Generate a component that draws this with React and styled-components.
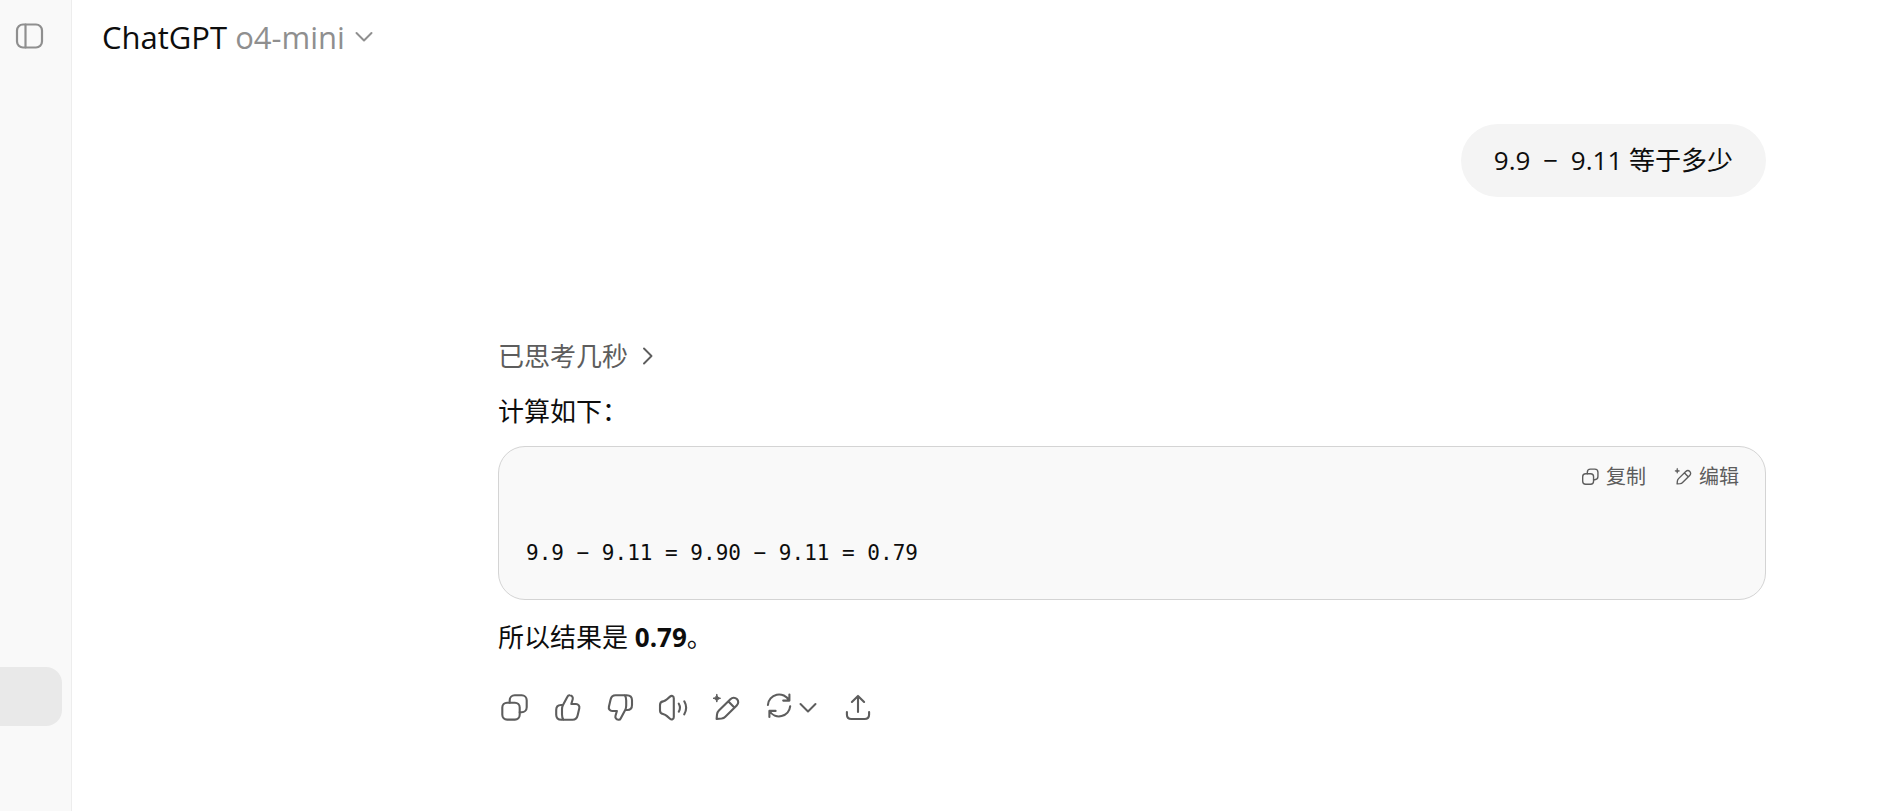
import styled, { createGlobalStyle } from 'styled-components'

const GlobalStyle = createGlobalStyle`
    * {
        box-sizing: border-box;
    }

    body {
        margin: 0;
        background: #ffffff;
        color: #0d0d0d;
        font-family: 'Open Sans', 'Noto Sans CJK SC', sans-serif;
        font-size: 26px;
        line-height: 44px;
    }
`

const Page = styled.div`
    display: flex;
    min-height: 100vh;
`

const Sidebar = styled.aside`
    flex: 0 0 72px;
    display: flex;
    flex-direction: column;
    padding-top: 20px;
    background: #f9f9f9;
    border-right: 1px solid #ededed;
`

const IconButton = styled.button`
    display: flex;
    align-items: center;
    gap: 4px;
    padding: 0;
    border: 0;
    background: none;
    color: ${(props) => props.$color || '#5d5d5d'};
    cursor: pointer;
`

const SidebarToggle = styled(IconButton)`
    align-self: flex-start;
    margin-left: 13px;
`

const RetryButton = styled(IconButton)`
    padding-right: 4px;
`

const History = styled.nav`
    margin-top: 615px;
    padding-right: 9px;
`

const CurrentChat = styled.a`
    display: block;
    height: 59px;
    background: #e9e9e9;
    border-radius: 0 16px 16px 0;
`

const Main = styled.main`
    flex: 1;
    min-width: 0;
`

const Header = styled.header`
    display: flex;
    padding: 15px 30px;
`

const ModelButton = styled.button`
    display: flex;
    align-items: center;
    gap: 10px;
    padding: 0;
    border: 0;
    background: none;
    color: #0d0d0d;
    font-family: inherit;
    font-size: 31px;
    line-height: 44px;
    cursor: pointer;
`

const ModelName = styled.span`
    color: #8f8f8f;
`

const Thread = styled.div`
    display: flex;
    flex-direction: column;
    padding: 50px 112px 80px 426px;
`

const UserMessage = styled.div`
    align-self: flex-end;
    padding: 14px 33px 15px;
    border-radius: 37px;
    background: #f4f4f4;
`

const Operator = styled.span`
    margin: 0 6px;
`

const Answer = styled.article`
    display: flex;
    flex-direction: column;
    margin-top: 137px;
`

const Thought = styled.button`
    align-self: flex-start;
    display: flex;
    align-items: center;
    gap: 14px;
    padding: 0;
    border: 0;
    background: none;
    color: #5d5d5d;
    font: inherit;
    cursor: pointer;
`

const Paragraph = styled.p`
    margin: ${(props) => props.$gap} 0 0;
`

const CodeBlock = styled.section`
    margin-top: 13px;
    border: 1px solid #d4d4d4;
    border-radius: 27px;
    background: #f9f9f9;
`

const CodeTools = styled.div`
    display: flex;
    justify-content: flex-end;
    gap: 27px;
    padding: 14px 26px 0;
`

const CodeButton = styled(IconButton)`
    gap: 6px;
    font-family: inherit;
    font-size: 20px;
    line-height: 32px;
`

const Code = styled.pre`
    margin: 0;
    padding: 44px 27px 30px;
    font-family: 'DejaVu Sans Mono', monospace;
    font-size: 21px;
    line-height: 32px;

    code {
        font-family: inherit;
    }
`

const Actions = styled.div`
    display: flex;
    gap: 21px;
    margin-top: 33px;
`

const Svg = styled.svg`
    display: block;
    flex: none;
    fill: none;
    stroke: currentColor;
    stroke-linecap: round;
    stroke-linejoin: round;
`

function Icon({ size = 32, stroke = 2.1, children }) {
    return (
        <Svg width={size} height={size} viewBox="0 0 32 32" strokeWidth={stroke} aria-hidden="true">
            {children}
        </Svg>
    )
}

function SidebarIcon() {
    return (
        <Icon stroke={2.2}>
            <rect x="4" y="4.5" width="25" height="23" rx="6" />
            <path d="M12.5 4.5v23" />
        </Icon>
    )
}

function CopyIcon(props) {
    return (
        <Icon {...props}>
            <rect x="4.3" y="10.7" width="17.4" height="16.9" rx="4.8" />
            <path d="M11.7 10.7V8.3a5 5 0 0 1 5-5h7a5 5 0 0 1 5 5v7a5 5 0 0 1-5 5h-2" />
        </Icon>
    )
}

const thumbPath =
    'M12 13 16.4 4.8C16.9 3.7 17.8 3.1 18.8 3.3c2.2.3 3.5 2 2.9 4L20.3 12H25c2.4 0 3.8 2 3.3 4.2l-1.7 7.4c-.6 2.6-2.4 4.2-5 4.2H10.5c-3.5 0-5.3-1.8-5.3-5V18c0-3.3 1.8-5 4.8-5h2c-.8 1.4-1 2.8-1 4.5v5c0 2 .3 3.8 1.5 5.3'

function ThumbUpIcon() {
    return (
        <Icon>
            <path d={thumbPath} />
        </Icon>
    )
}

function ThumbDownIcon() {
    return (
        <Icon>
            <path d={thumbPath} transform="rotate(180 16.6 15.5)" />
        </Icon>
    )
}

function SpeakerIcon() {
    return (
        <Icon>
            <path d="M3 13c0-2 1-3.2 3-3.6 1.5-.4 2.8-1 4-2.1l3-2.7c1.6-1.4 3.800-.6 3.800 1.600V25c0 2.400-2.200 3.200-3.800 1.800l-3-2.700c-1.200-1.100-2.500-1.700-4-2.100-2-.4-3-1.700-3-3.600z" />
            <path d="M21.8 11.7q2.300 4 0 8M27.300 9.300q3.700 6.500 0 13" />
        </Icon>
    )
}

function EditIcon(props) {
    return (
        <Icon {...props}>
            <path d="M6.6 27 7 22.5c.2-1.700.8-2.800 1.900-3.900L20.400 7.200c2-1.900 4.700-1.900 6.500-.1s1.800 4.500-.2 6.500L15.300 24.700c-1 1-2.200 1.600-3.700 1.800zM18.500 9.500l5.800 6" />
            <path d="M6.8 2.5c.5 2.500 1.300 3.300 3.800 3.800-2.500.5-3.300 1.300-3.800 3.800-.5-2.500-1.300-3.300-3.800-3.800 2.500-.5 3.300-1.300 3.800-3.800z" fill="currentColor" strokeWidth="1" />
        </Icon>
    )
}

function RetryIcon() {
    return (
        <Icon>
            <path d="M4.900 13A11.200 11.200 0 0 1 26 8.500M26.400 2.600v6h-6.200" />
            <path d="M27.200 14.200A11.200 11.200 0 0 1 6.500 19M6.400 25v-6.100h6.200" />
        </Icon>
    )
}

function ShareIcon() {
    return (
        <Icon>
            <path d="M16 20V4M9.900 10 16 3.900l6.100 6.100" />
            <path d="M4.900 20v2.500c0 3 1.500 4.500 4.500 4.500h13.200c3 0 4.500-1.500 4.500-4.500V20" />
        </Icon>
    )
}

function ChevronDown() {
    return (
        <Svg width="18" height="12" viewBox="0 0 18 12" strokeWidth="2" aria-hidden="true">
            <path d="m1.500 2 7.500 7.500L16.500 2" />
        </Svg>
    )
}

function ChevronRight() {
    return (
        <Svg width="12" height="18" viewBox="0 0 12 18" strokeWidth="1.9" aria-hidden="true">
            <path d="M2 1.500 9.500 9 2 16.500" />
        </Svg>
    )
}

function App() {
    return (
        <Page>
            <GlobalStyle />
            <Sidebar>
                <SidebarToggle $color="#8f8f8f" aria-label="打开边栏">
                    <SidebarIcon />
                </SidebarToggle>
                <History>
                    <CurrentChat href="#" aria-label="当前聊天" />
                </History>
            </Sidebar>
            <Main>
                <Header>
                    <ModelButton>
                        <span>
                            ChatGPT <ModelName>o4-mini</ModelName>
                        </span>
                        <ModelName>
                            <ChevronDown />
                        </ModelName>
                    </ModelButton>
                </Header>
                <Thread>
                    <UserMessage>
                        9.9 <Operator>−</Operator> 9.11 等于多少
                    </UserMessage>
                    <Answer>
                        <Thought>
                            已思考几秒
                            <ChevronRight />
                        </Thought>
                        <Paragraph $gap="11px">计算如下：</Paragraph>
                        <CodeBlock>
                            <CodeTools>
                                <CodeButton>
                                    <CopyIcon size={20} stroke={2.2} />
                                    复制
                                </CodeButton>
                                <CodeButton>
                                    <EditIcon size={20} stroke={2.2} />
                                    编辑
                                </CodeButton>
                            </CodeTools>
                            <Code>
                                <code>9.9 − 9.11 = 9.90 − 9.11 = 0.79</code>
                            </Code>
                        </CodeBlock>
                        <Paragraph $gap="15px">
                            所以结果是 <strong>0.79</strong>。
                        </Paragraph>
                        <Actions>
                            <IconButton aria-label="复制">
                                <CopyIcon />
                            </IconButton>
                            <IconButton aria-label="最佳回复">
                                <ThumbUpIcon />
                            </IconButton>
                            <IconButton aria-label="错误回复">
                                <ThumbDownIcon />
                            </IconButton>
                            <IconButton aria-label="朗读">
                                <SpeakerIcon />
                            </IconButton>
                            <IconButton aria-label="在画布中编辑">
                                <EditIcon />
                            </IconButton>
                            <RetryButton aria-label="切换模型">
                                <RetryIcon />
                                <ChevronDown />
                            </RetryButton>
                            <IconButton aria-label="共享">
                                <ShareIcon />
                            </IconButton>
                        </Actions>
                    </Answer>
                </Thread>
            </Main>
        </Page>
    )
}

export default App
